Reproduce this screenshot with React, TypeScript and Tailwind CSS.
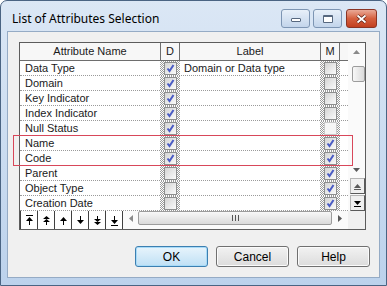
import React from "react";

type Row = { name: string; d: boolean; label?: string; m: boolean; mFaded?: boolean };

const rows: Row[] = [
  { name: "Data Type", d: true, label: "Domain or Data type", m: false },
  { name: "Domain", d: true, m: false },
  { name: "Key Indicator", d: true, m: false },
  { name: "Index Indicator", d: true, m: false },
  { name: "Null Status", d: true, m: false, mFaded: true },
  { name: "Name", d: true, m: true },
  { name: "Code", d: true, m: true },
  { name: "Parent", d: false, m: true },
  { name: "Object Type", d: false, m: true },
  { name: "Creation Date", d: false, m: true },
];

function Check({ checked, faded }: { checked: boolean; faded?: boolean }) {
  return (
    <span
      className={`flex h-[13px] w-[13px] items-center justify-center border ${
        faded
          ? "border-[#c8c8c8] bg-[#f6f6f6]"
          : "border-[#8e8f8f] bg-gradient-to-br from-[#d4d4d4] to-[#fbfbfb]"
      }`}
    >
      {checked && (
        <svg width="11" height="11" viewBox="0 0 11 11">
          <path d="M2.5 5.5 L4.5 8 L8.5 2" fill="none" stroke="#4b5cc4" strokeWidth="2" />
        </svg>
      )}
    </span>
  );
}

// hatched grey cell around a checkbox
function CheckCell({ checked, faded }: { checked: boolean; faded?: boolean }) {
  return (
    <div className="flex w-[20px] items-center justify-center bg-[image:repeating-conic-gradient(#9c9c9c_0%_25%,#ffffff_0%_50%)] bg-[length:2px_2px]">
      <Check checked={checked} faded={faded} />
    </div>
  );
}

function Arrow({ dir, bar, dbl }: { dir: "up" | "down"; bar?: boolean; dbl?: boolean }) {
  const up = dir === "up";
  return (
    <svg width="9" height="11" viewBox="0 0 9 11">
      {up ? (
        <>
          {bar && <rect x="1" y="0" width="7" height="1" fill="#000" />}
          <path d={dbl ? "M4.5 1 L8 4 L1 4 Z M4.5 4 L8 7 L1 7 Z" : "M4.5 2 L8 6 L1 6 Z"} fill="#000" />
          <rect x="4" y={dbl ? 7 : 6} width="1" height={dbl ? 3 : 4} fill="#000" />
        </>
      ) : (
        <>
          <rect x="4" y="1" width="1" height={dbl ? 3 : 4} fill="#000" />
          <path d={dbl ? "M1 4 L8 4 L4.5 7 Z M1 7 L8 7 L4.5 10 Z" : "M1 5 L8 5 L4.5 9 Z"} fill="#000" />
          {bar && <rect x="1" y="10" width="7" height="1" fill="#000" />}
        </>
      )}
    </svg>
  );
}

function CaptionButton({ kind }: { kind: "min" | "max" | "close" }) {
  if (kind === "close") {
    return (
      <div className="flex h-[19px] w-[31px] items-center justify-center rounded-[3px] border border-[#8a3424] bg-gradient-to-b from-[#e9a997] via-[#d5603f] to-[#c23f1f]">
        <svg width="11" height="10" viewBox="0 0 11 10">
          <path d="M1.5 1.5 L9.5 8.5 M9.5 1.5 L1.5 8.5" stroke="#5a1c10" strokeWidth="3.2" />
          <path d="M1.5 1.5 L9.5 8.5 M9.5 1.5 L1.5 8.5" stroke="#ffffff" strokeWidth="1.8" />
        </svg>
      </div>
    );
  }
  return (
    <div className="flex h-[19px] w-[29px] items-center justify-center rounded-[3px] border border-[#7d95b3] bg-gradient-to-b from-[#e8f0f9] to-[#c3d5eb]">
      {kind === "min" ? (
        <span className="mt-[3px] h-[4px] w-[10px] rounded-[1px] border border-[#57687f] bg-white" />
      ) : (
        <span className="h-[8px] w-[10px] rounded-[1px] border border-[#57687f] border-t-2 bg-white" />
      )}
    </div>
  );
}

function PushButton({ label, primary }: { label: string; primary?: boolean }) {
  return (
    <button
      className={`flex h-[21px] w-[73px] items-center justify-center rounded-[3px] border text-[12px] text-black ${
        primary
          ? "border-[#3c7fb1] bg-gradient-to-b from-[#e8f4fc] to-[#bfe0f5] shadow-[inset_0_0_0_1px_#a8dbf8]"
          : "border-[#707070] bg-gradient-to-b from-[#f2f2f2] to-[#dcdcdc] shadow-[inset_0_0_0_1px_#fbfbfb]"
      }`}
    >
      {label}
    </button>
  );
}

export default function App() {
  return (
    <div className="h-[286px] w-[387px] overflow-hidden bg-white">
      <div className="flex h-full w-full flex-col rounded-t-[7px] border border-[#4a6483] bg-gradient-to-b from-[#dbe7f5] to-[#bcd2ec] font-['Liberation_Sans',Arial,sans-serif]">
        {/* Title bar */}
        <div className="flex h-[30px] items-start pl-[11px] pr-[9px]">
          <div className="mt-[9px] flex-1 font-['Noto_Sans',sans-serif] text-[12px] leading-[18px] text-black">
            List of Attributes Selection
          </div>
          <div className="mt-[8px] flex gap-[3px]">
            <CaptionButton kind="min" />
            <CaptionButton kind="max" />
            <div className="ml-[1px]">
              <CaptionButton kind="close" />
            </div>
          </div>
        </div>

        {/* Client area */}
        <div className="mx-[6px] mb-[7px] flex flex-1 flex-col border border-[#95abc5] bg-[#f0f0f0] pl-[11px] pt-[10px]">
          <div className="relative">
            {/* Grid */}
            <div className="flex h-[188px] w-[347px] flex-col border border-[#5c5c5c] bg-white text-[11px] text-[#1a1a1a]">
              <div className="flex h-[168px]">
                <div className="flex w-[328px] flex-col">
                  {/* Header */}
                  <div className="flex h-[18px] border-b border-[#6e6e6e] bg-[#f7f7f7] leading-[17px]">
                    <div className="w-[141px] border-r border-[#6e6e6e] text-center">Attribute Name</div>
                    <div className="w-[19px] border-r border-[#6e6e6e] text-center">D</div>
                    <div className="w-[141px] border-r border-[#6e6e6e] text-center">Label</div>
                    <div className="w-[19px] border-r border-[#6e6e6e] text-center">M</div>
                    <div className="flex-1" />
                  </div>
                  {rows.map((r) => (
                    <div key={r.name} className="flex h-[15px] border-b border-dotted border-[#9a9a9a]">
                      <div className="w-[140px] truncate pl-[5px] leading-[14px]">{r.name}</div>
                      <CheckCell checked={r.d} />
                      <div className="w-[140px] truncate pl-[4px] leading-[14px]">{r.label ?? ""}</div>
                      <CheckCell checked={r.m} faded={r.mFaded} />
                      <div className="flex-1" />
                    </div>
                  ))}
                </div>

                {/* Vertical scrollbar */}
                <div className="flex w-[17px] flex-col items-center bg-[#fafafa]">
                  <div className="flex h-[17px] items-center justify-center">
                    <svg width="7" height="4" viewBox="0 0 7 4">
                      <path d="M0 4 L3.5 0 L7 4 Z" fill="#8a8a8a" />
                    </svg>
                  </div>
                  <div className="ml-[3px] mt-[6px] h-[16px] w-[13px] rounded-[2px] border border-[#9c9c9c] bg-gradient-to-r from-[#f8f8f8] to-[#dadada]" />
                  <div className="flex-1" />
                  <div className="mb-[4px] flex h-[8px] items-center justify-center">
                    <svg width="7" height="4" viewBox="0 0 7 4">
                      <path d="M0 0 L7 0 L3.5 4 Z" fill="#5a5a5a" />
                    </svg>
                  </div>
                  <div className="ml-[2px] flex h-[16px] w-[15px] items-center justify-center border border-[#b5b5b5] border-r-[#5a5a5a] border-b-[#5a5a5a] bg-[#f0f0f0]">
                    <svg width="9" height="7" viewBox="0 0 9 7">
                      <path d="M1 5 L4.5 1 L8 5 Z" fill="#5a5a5a" />
                      <rect x="1" y="6" width="7" height="1" fill="#5a5a5a" />
                    </svg>
                  </div>
                  <div className="ml-[2px] mt-[1px] flex h-[16px] w-[15px] items-center justify-center border border-[#b5b5b5] border-r-[#5a5a5a] border-b-[#5a5a5a] bg-[#f0f0f0]">
                    <svg width="9" height="7" viewBox="0 0 9 7">
                      <path d="M1 1 L8 1 L4.5 5 Z" fill="#000" />
                      <rect x="1" y="6" width="7" height="1" fill="#000" />
                    </svg>
                  </div>
                </div>
              </div>

              {/* Bottom: move buttons + horizontal scrollbar */}
              <div className="flex h-[18px]">
                <div className="flex border-r border-[#404040]">
                  <div className="flex w-[17px] items-center justify-center border-l border-[#404040]"><Arrow dir="up" bar /></div>
                  <div className="flex w-[17px] items-center justify-center border-l border-[#404040]"><Arrow dir="up" dbl /></div>
                  <div className="flex w-[17px] items-center justify-center border-l border-[#404040]"><Arrow dir="up" /></div>
                  <div className="flex w-[17px] items-center justify-center border-l border-[#404040]"><Arrow dir="down" /></div>
                  <div className="flex w-[17px] items-center justify-center border-l border-[#404040]"><Arrow dir="down" dbl /></div>
                  <div className="flex w-[17px] items-center justify-center border-l border-[#404040]"><Arrow dir="down" bar /></div>
                </div>
                <div className="flex flex-1 items-start bg-[#fafafa]">
                  <div className="flex h-[15px] w-[15px] items-center justify-center">
                    <svg width="4" height="7" viewBox="0 0 4 7">
                      <path d="M4 0 L0 3.5 L4 7 Z" fill="#8a8a8a" />
                    </svg>
                  </div>
                  <div className="flex h-[14px] w-[194px] items-center justify-center rounded-[2px] border border-[#9c9c9c] bg-gradient-to-b from-[#f8f8f8] to-[#dadada]">
                    <svg width="7" height="6" viewBox="0 0 7 6">
                      <rect x="0" y="0" width="1" height="6" fill="#555" />
                      <rect x="3" y="0" width="1" height="6" fill="#555" />
                      <rect x="6" y="0" width="1" height="6" fill="#555" />
                    </svg>
                  </div>
                  <div className="flex h-[15px] flex-1 items-center justify-center">
                    <svg width="4" height="7" viewBox="0 0 4 7">
                      <path d="M0 0 L4 3.5 L0 7 Z" fill="#5a5a5a" />
                    </svg>
                  </div>
                </div>
                <div className="w-[17px] bg-[#f0f0f0]" />
              </div>
            </div>

            {/* red highlight around Name / Code */}
            <div className="pointer-events-none absolute left-[-6px] top-[93px] h-[31px] w-[340px] border border-[#d8475a]" />
          </div>

          {/* Buttons */}
          <div className="mt-[16px] flex justify-end gap-[8px] pr-[9px]">
            <PushButton label="OK" primary />
            <PushButton label="Cancel" />
            <PushButton label="Help" />
          </div>
        </div>
      </div>
    </div>
  );
}
